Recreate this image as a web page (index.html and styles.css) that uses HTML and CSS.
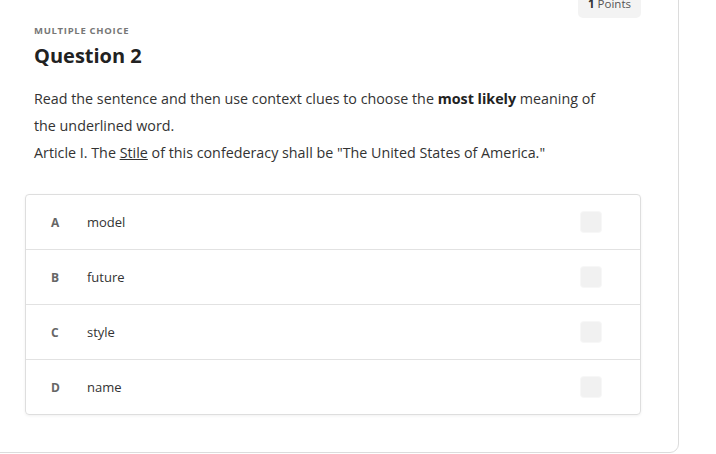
FILE: index.html
```html
<!DOCTYPE html>
<html>
<head>
<meta charset="utf-8">
<link rel="stylesheet" href="styles.css">
</head>
<body>
<div class="card">
  <div class="points"><b>1</b> Points</div>
  <div class="label">MULTIPLE CHOICE</div>
  <h1 class="title">Question 2</h1>
  <div class="prompt">
    <p>Read the sentence and then use context clues to choose the <b>most likely</b> meaning of the underlined word.</p>
    <p>Article I. The <u>Stile</u> of this confederacy shall be "The United States of America."</p>
  </div>
  <div class="answers">
    <div class="row"><span class="letter">A</span><span class="text">model</span><span class="check"></span></div>
    <div class="row"><span class="letter">B</span><span class="text">future</span><span class="check"></span></div>
    <div class="row"><span class="letter">C</span><span class="text">style</span><span class="check"></span></div>
    <div class="row"><span class="letter">D</span><span class="text">name</span><span class="check"></span></div>
  </div>
</div>
</body>
</html>
```
FILE: styles.css
```css
html, body {
  margin: 0;
  padding: 0;
  background: #fff;
  font-family: "Open Sans", "Liberation Sans", sans-serif;
  overflow: hidden;
}
.card {
  position: relative;
  box-sizing: border-box;
  width: 688px;
  margin: -12px 0 0 -9px;
  padding: 36px 37px 37px 42px;
  border: 1px solid #dcdcdc;
  border-radius: 9px;
  background: #fff;
}
.points {
  position: absolute;
  top: 2px;
  right: 37px;
  width: 63px;
  height: 27px;
  box-sizing: border-box;
  padding-top: 6px;
  text-align: center;
  background: #f3f3f3;
  border-radius: 5px;
  font-size: 11.5px;
  line-height: 14px;
  color: #555;
}
.points b { color: #333; }
.label {
  font-size: 9.5px;
  line-height: 12px;
  font-weight: 700;
  letter-spacing: 0.7px;
  color: #777;
}
.title {
  margin: 5px 0 0;
  font-size: 20px;
  line-height: 28px;
  font-weight: 700;
  color: #222;
}
.prompt {
  margin-top: 15px;
  width: 572px;
  font-size: 14.3px;
  line-height: 27px;
  color: #333;
}
.prompt p { margin: 0; }
.prompt b { font-weight: 700; color: #222; }
.answers {
  margin: 28px 0 0 -9px;
  width: 616px;
  box-sizing: border-box;
  border: 1px solid #dedede;
  border-radius: 4px;
  box-shadow: 0 1px 3px rgba(0,0,0,0.06);
}
.row {
  display: flex;
  align-items: center;
  height: 55px;
  box-sizing: border-box;
  padding: 0 39px 0 25px;
  border-top: 1px solid #e2e2e2;
}
.row:first-child { border-top: none; height: 54px; }
.letter {
  width: 36px;
  font-size: 12px;
  font-weight: 700;
  color: #666;
}
.text {
  flex: 1;
  font-size: 13px;
  color: #333;
}
.check {
  width: 20px;
  height: 20px;
  border-radius: 3px;
  background: #f1f1f1;
  box-shadow: 0 0 0 1px #f7f7f7;
}
```
